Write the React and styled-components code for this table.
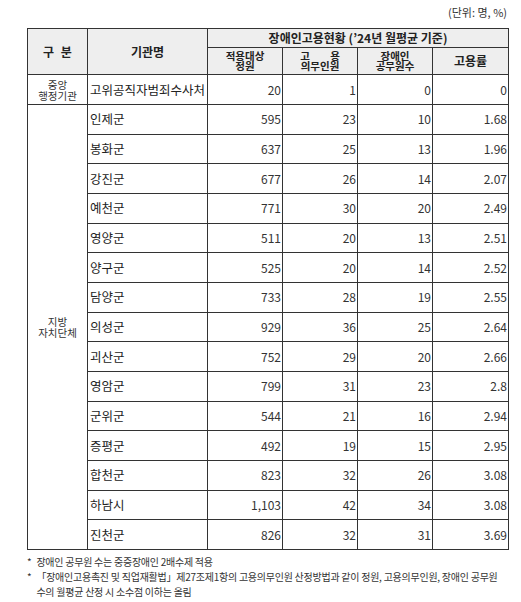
import React from "react";
import styled, { createGlobalStyle } from "styled-components";

const Global = createGlobalStyle`
  html, body { margin: 0; padding: 0; background: #fff; }
  body { font-family: "Noto Sans CJK KR", "Noto Sans", sans-serif; color: #222; }
`;

const Page = styled.div`
  width: 521px;
  padding: 5px 13px 0 27px;
  box-sizing: border-box;
`;

const Unit = styled.div`
  text-align: right;
  font-size: 11px;
  line-height: 15px;
  color: #333;
  padding-right: 1px;
  margin-bottom: 8px;
`;

const Table = styled.table`
  border-collapse: collapse;
  table-layout: fixed;
  width: 481px;
  font-size: 12px;
`;

const Th = styled.th`
  background: #eeeeee;
  border: 1px solid #333;
  font-weight: 700;
  font-size: ${(p) => (p.$small ? "10.5px" : "12px")};
  line-height: ${(p) => (p.$small ? "10.5px" : "14px")};
  padding: 0;
  text-align: center;
  color: #222;
  white-space: pre-line;
  word-spacing: ${(p) => p.$spaced || "normal"};
  overflow: hidden;
`;

const HeadRow = styled.tr`
  height: ${(p) => p.$h}px;
`;

const Row = styled.tr`
  height: ${(p) => p.$h || 29.67}px;
`;

const Cat = styled.td`
  border: 1px solid #333;
  text-align: center;
  font-size: 10.5px;
  line-height: 11px;
  padding: 0;
  white-space: pre-line;
  color: #333;
`;

const Name = styled.td`
  border: 1px solid #333;
  text-align: left;
  padding: 0 0 0 2px;
  font-size: 12.5px;
  line-height: 16px;
  color: #222;
`;

const Num = styled.td`
  border: 1px solid #333;
  text-align: right;
  padding: 0 1px 0 0;
  font-size: 12px;
  line-height: 16px;
  color: #333;
`;

const Notes = styled.div`
  margin-top: 4px;
  font-size: 10px;
  line-height: 15px;
  letter-spacing: -0.25px;
  color: #333;
`;

const Note = styled.div`
  display: flex;
  gap: 5px;
`;

const Star = styled.span`
  flex: 0 0 auto;
`;

const rows = [
  ["인제군", "595", "23", "10", "1.68"],
  ["봉화군", "637", "25", "13", "1.96"],
  ["강진군", "677", "26", "14", "2.07"],
  ["예천군", "771", "30", "20", "2.49"],
  ["영양군", "511", "20", "13", "2.51"],
  ["양구군", "525", "20", "14", "2.52"],
  ["담양군", "733", "28", "19", "2.55"],
  ["의성군", "929", "36", "25", "2.64"],
  ["괴산군", "752", "29", "20", "2.66"],
  ["영암군", "799", "31", "23", "2.8"],
  ["군위군", "544", "21", "16", "2.94"],
  ["증평군", "492", "19", "15", "2.95"],
  ["합천군", "823", "32", "26", "3.08"],
  ["하남시", "1,103", "42", "34", "3.08"],
  ["진천군", "826", "32", "31", "3.69"],
];

export default function App() {
  return (
    <Page>
      <Global />
      <Unit>(단위: 명, %)</Unit>
      <Table>
        <colgroup>
          <col style={{ width: 60 }} />
          <col style={{ width: 120 }} />
          <col style={{ width: 75 }} />
          <col style={{ width: 75 }} />
          <col style={{ width: 75 }} />
          <col style={{ width: 76 }} />
        </colgroup>
        <thead>
          <HeadRow $h={19}>
            <Th rowSpan={2} $spaced="4px">구 분</Th>
            <Th rowSpan={2}>기관명</Th>
            <Th colSpan={4}>장애인고용현황 (’24년 월평균 기준)</Th>
          </HeadRow>
          <HeadRow $h={27}>
            <Th $small>{"적용대상\n정원"}</Th>
            <Th $small $spaced="18px">{"고 용\n의무인원"}</Th>
            <Th $small>{"장애인\n공무원수"}</Th>
            <Th>고용률</Th>
          </HeadRow>
        </thead>
        <tbody>
          <Row $h={30}>
            <Cat>{"중앙\n행정기관"}</Cat>
            <Name>고위공직자범죄수사처</Name>
            <Num>20</Num>
            <Num>1</Num>
            <Num>0</Num>
            <Num>0</Num>
          </Row>
          {rows.map((r, i) => (
            <Row key={r[0]}>
              {i === 0 && <Cat rowSpan={rows.length}>{"지방\n자치단체"}</Cat>}
              <Name>{r[0]}</Name>
              <Num>{r[1]}</Num>
              <Num>{r[2]}</Num>
              <Num>{r[3]}</Num>
              <Num>{r[4]}</Num>
            </Row>
          ))}
        </tbody>
      </Table>
      <Notes>
        <Note>
          <Star>*</Star>
          <span>장애인 공무원 수는 중증장애인 2배수제 적용</span>
        </Note>
        <Note>
          <Star>*</Star>
          <span>「장애인고용촉진 및 직업재활법」제27조제1항의 고용의무인원 산정방법과 같이 정원, 고용의무인원, 장애인 공무원 수의 월평균 산정 시 소수점 이하는 올림</span>
        </Note>
      </Notes>
    </Page>
  );
}
